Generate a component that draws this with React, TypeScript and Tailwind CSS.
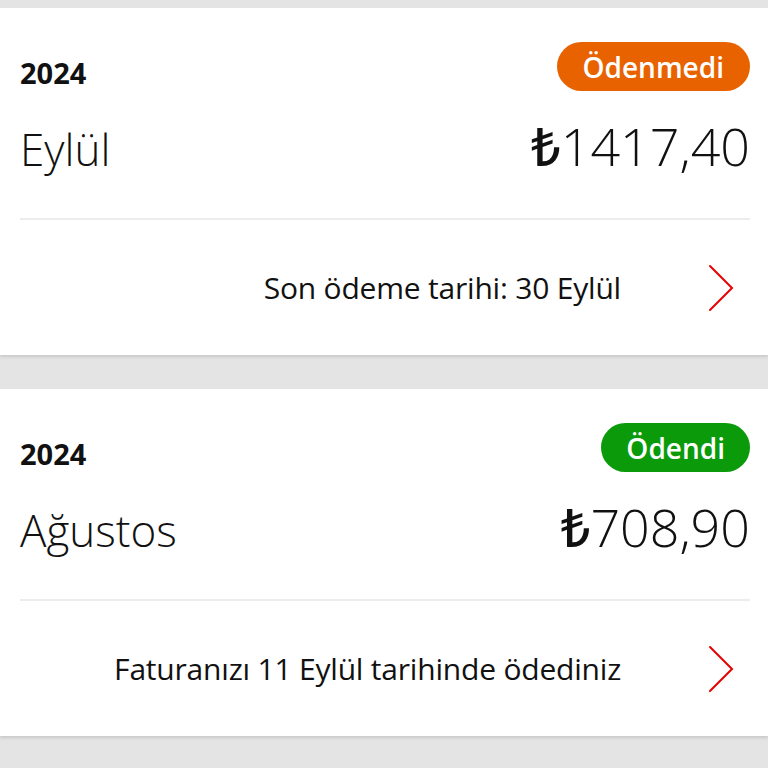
import React from "react";

interface Bill {
  year: string;
  month: string;
  amount: string;
  status: string;
  paid: boolean;
  note: string;
}

const bills: Bill[] = [
  {
    year: "2024",
    month: "Eylül",
    amount: "1417,40",
    status: "Ödenmedi",
    paid: false,
    note: "Son ödeme tarihi: 30 Eylül",
  },
  {
    year: "2024",
    month: "Ağustos",
    amount: "708,90",
    status: "Ödendi",
    paid: true,
    note: "Faturanızı 11 Eylül tarihinde ödediniz",
  },
];

function Chevron() {
  return (
    <svg width="28" height="48" viewBox="0 0 28 48" fill="none">
      <path
        d="M3 2 L25 24 L3 46"
        stroke="#e60000"
        strokeWidth="2"
        strokeLinecap="round"
        strokeLinejoin="miter"
      />
    </svg>
  );
}

function BillCard({ bill }: { bill: Bill }) {
  return (
    <div className="bg-white h-[347px] shadow-[0_2px_3px_rgba(0,0,0,0.12)] flex flex-col">
      <div className="pl-5 pr-[18px]">
        <div className="flex justify-between items-start pt-[34px]">
          <span className="mt-[16px] text-[29px] leading-none font-bold text-[#111]">
            {bill.year}
          </span>
          <span
            className={
              bill.paid
                ? "h-[49px] px-[25px] rounded-full bg-[#0a9a0a] text-white text-[28px] font-semibold flex items-center leading-none"
                : "h-[49px] px-[26px] rounded-full bg-[#e96200] text-white text-[28px] font-semibold flex items-center leading-none"
            }
          >
            {bill.status}
          </span>
        </div>
        <div className="flex justify-between items-baseline h-[60px] mt-[29px]">
          <span className="text-[44px] font-light leading-none text-[#111]">
            {bill.month}
          </span>
          <span className="text-[52px] font-light leading-none text-[#111]">
            <span className="font-medium">₺</span>
            {bill.amount}
          </span>
        </div>
      </div>
      <div className="ml-5 mr-[18px] mt-[38px] h-[2px] bg-[#ececec]" />
      <div className="flex-1 flex items-center justify-end pr-[33px]">
        <span className="text-[30px] text-[#111] tracking-[-0.2px]">
          {bill.note}
        </span>
        <div className="ml-[86px]">
          <Chevron />
        </div>
      </div>
    </div>
  );
}

export default function App() {
  return (
    <div
      className="w-[768px] h-[768px] bg-[#e4e4e4] pt-2 flex flex-col gap-[34px] overflow-hidden"
      style={{ fontFamily: '"Open Sans", "Noto Sans", sans-serif' }}
    >
      {bills.map((b, i) => (
        <BillCard key={i} bill={b} />
      ))}
    </div>
  );
}
